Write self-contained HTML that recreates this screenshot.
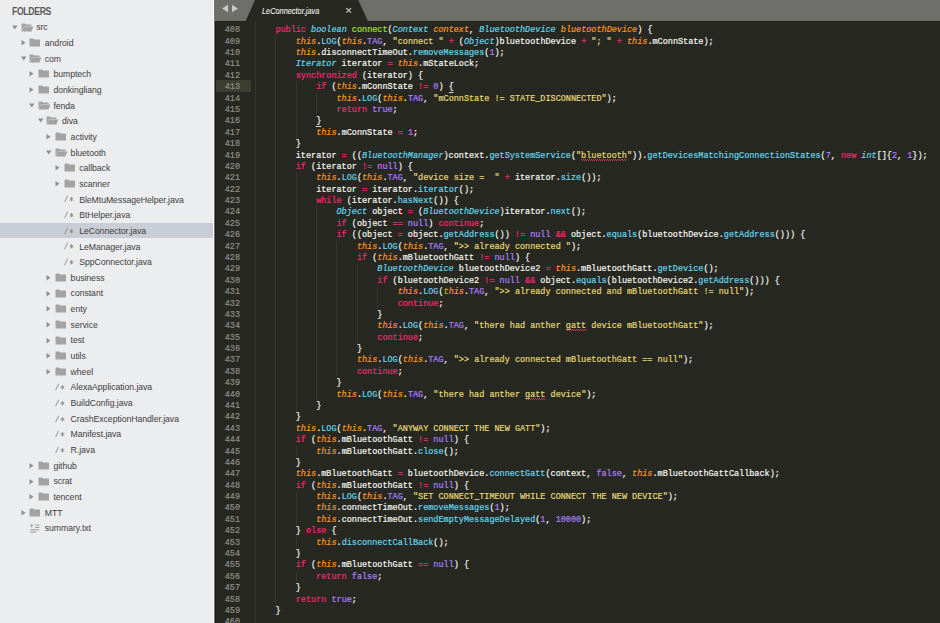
<!DOCTYPE html>
<html><head><meta charset="utf-8"><style>
html,body{margin:0;padding:0;width:940px;height:623px;overflow:hidden;background:#272822}
#side{position:absolute;left:0;top:0;width:213px;height:623px;background:#ecedef;overflow:hidden}
#sep{position:absolute;left:213px;top:0;width:1px;height:623px;background:#fbfbfb}
#sep2{position:absolute;left:214px;top:0px;width:1px;height:623px;background:#72736e}
#sep3{position:absolute;left:215px;top:22px;width:1px;height:601px;background:#1c1d18}
.hd{position:absolute;left:11.8px;top:6.0px;font:bold 10.2px/12px "Liberation Sans",sans-serif;color:#5a5a5a;letter-spacing:-0.4px;transform-origin:0 50%;transform:scaleX(0.85)}
.tx{position:absolute;font:8.7px "Liberation Sans",sans-serif;color:#404040;white-space:nowrap;letter-spacing:-0.05px}
.jv{position:absolute;font:8.5px "Liberation Sans",sans-serif;color:#8a8a8a;white-space:nowrap}
.sel{position:absolute;left:0;width:213px;background:#c9cdd5}
.ic{position:absolute;display:block}
#tabbar{position:absolute;left:214px;top:0;width:726px;height:21px;background:#6e6f6a;border-bottom:1px solid #20211c}
#tab{position:absolute;left:246px;top:0;width:122px;height:20px}
.tabt{position:absolute;left:261.5px;top:4.6px;font:italic 8.6px/12px "Liberation Sans",sans-serif;color:#f3f3f0;letter-spacing:0px;-webkit-text-stroke:0.1px #f3f3f0;transform-origin:0 50%;transform:scaleX(0.855);white-space:nowrap}
#ed{position:absolute;left:215px;top:22px;width:725px;height:603px;background:#272822}
.ln{position:absolute;left:212.5px;width:27px;text-align:right;height:11.4px;font:9.5px/11.385px "Liberation Mono",monospace;color:#8f908a;transform-origin:100% 50%;transform:scaleX(0.8937);white-space:pre;-webkit-text-stroke:0.2px currentColor}
.cl{position:absolute;left:254.8px;height:11.4px;font:9.5px/11.385px "Liberation Mono",monospace;color:#f8f8f2;transform-origin:0 50%;transform:scaleX(0.8937);white-space:pre;-webkit-text-stroke:0.2px currentColor}
.g{position:absolute;width:1px;background:#35362e}
.hl{position:absolute;left:216px;top:80.4px;width:35.3px;height:11.5px;background:#3e3d32}
.k{color:#f92672} .st{color:#66d9ef;font-style:italic} .c{color:#ae81ff} .th{color:#fd971f;font-style:italic}
.ty{color:#66d9ef;font-style:italic} .fn{color:#a6e22e} .pa{color:#fd971f;font-style:italic} .m{color:#66d9ef} .s{color:#e6db74}
.ub{border-bottom:1px solid #d8d8d0}
.sq{background-image:repeating-linear-gradient(90deg,#c23a62 0 1.1px,transparent 1.1px 2.2px),repeating-linear-gradient(90deg,transparent 0 1.1px,#c23a62 1.1px 2.2px);background-size:100% 1px,100% 1px;background-position:0 9px,0 10px;background-repeat:no-repeat}
</style></head><body>
<div id=side>
<div class=hd>FOLDERS</div>
<svg class=ic style="left:12.00px;top:24.50px" width="6" height="5"><path d="M0 0.5H5.5L2.75 4.5Z" fill="#8f8f8f"/></svg><svg class=ic style="left:20.50px;top:22.50px" width="13" height="9"><path d="M0.5 1.2Q0.5 0.5 1.2 0.5H4.2L5.2 1.5H10Q10.5 1.5 10.5 2V3.2H3L0.5 8.5Z" fill="#a3a3a3"/><path d="M3 3.6H12.4L10.4 8.5H0.8Z" fill="#a3a3a3"/></svg><div class=tx style="left:36.20px;top:20.27px;height:15.66px;line-height:15.66px">src</div><svg class=ic style="left:20.60px;top:40.16px" width="5" height="6"><path d="M0.5 0L4.5 2.75L0.5 5.5Z" fill="#8f8f8f"/></svg><svg class=ic style="left:29.10px;top:38.16px" width="12" height="9"><path d="M0.5 1.2Q0.5 0.5 1.2 0.5H4.2L5.2 1.5H10.3Q11 1.5 11 2.2V8Q11 8.5 10.5 8.5H1Q0.5 8.5 0.5 8Z" fill="#a3a3a3"/></svg><div class=tx style="left:44.80px;top:35.93px;height:15.66px;line-height:15.66px">android</div><svg class=ic style="left:20.60px;top:55.82px" width="6" height="5"><path d="M0 0.5H5.5L2.75 4.5Z" fill="#8f8f8f"/></svg><svg class=ic style="left:29.10px;top:53.82px" width="13" height="9"><path d="M0.5 1.2Q0.5 0.5 1.2 0.5H4.2L5.2 1.5H10Q10.5 1.5 10.5 2V3.2H3L0.5 8.5Z" fill="#a3a3a3"/><path d="M3 3.6H12.4L10.4 8.5H0.8Z" fill="#a3a3a3"/></svg><div class=tx style="left:44.80px;top:51.59px;height:15.66px;line-height:15.66px">com</div><svg class=ic style="left:29.20px;top:71.48px" width="5" height="6"><path d="M0.5 0L4.5 2.75L0.5 5.5Z" fill="#8f8f8f"/></svg><svg class=ic style="left:37.70px;top:69.48px" width="12" height="9"><path d="M0.5 1.2Q0.5 0.5 1.2 0.5H4.2L5.2 1.5H10.3Q11 1.5 11 2.2V8Q11 8.5 10.5 8.5H1Q0.5 8.5 0.5 8Z" fill="#a3a3a3"/></svg><div class=tx style="left:53.40px;top:67.25px;height:15.66px;line-height:15.66px">bumptech</div><svg class=ic style="left:29.20px;top:87.14px" width="5" height="6"><path d="M0.5 0L4.5 2.75L0.5 5.5Z" fill="#8f8f8f"/></svg><svg class=ic style="left:37.70px;top:85.14px" width="12" height="9"><path d="M0.5 1.2Q0.5 0.5 1.2 0.5H4.2L5.2 1.5H10.3Q11 1.5 11 2.2V8Q11 8.5 10.5 8.5H1Q0.5 8.5 0.5 8Z" fill="#a3a3a3"/></svg><div class=tx style="left:53.40px;top:82.91px;height:15.66px;line-height:15.66px">donkingliang</div><svg class=ic style="left:29.20px;top:102.80px" width="6" height="5"><path d="M0 0.5H5.5L2.75 4.5Z" fill="#8f8f8f"/></svg><svg class=ic style="left:37.70px;top:100.80px" width="13" height="9"><path d="M0.5 1.2Q0.5 0.5 1.2 0.5H4.2L5.2 1.5H10Q10.5 1.5 10.5 2V3.2H3L0.5 8.5Z" fill="#a3a3a3"/><path d="M3 3.6H12.4L10.4 8.5H0.8Z" fill="#a3a3a3"/></svg><div class=tx style="left:53.40px;top:98.57px;height:15.66px;line-height:15.66px">fenda</div><svg class=ic style="left:37.80px;top:118.46px" width="6" height="5"><path d="M0 0.5H5.5L2.75 4.5Z" fill="#8f8f8f"/></svg><svg class=ic style="left:46.30px;top:116.46px" width="13" height="9"><path d="M0.5 1.2Q0.5 0.5 1.2 0.5H4.2L5.2 1.5H10Q10.5 1.5 10.5 2V3.2H3L0.5 8.5Z" fill="#a3a3a3"/><path d="M3 3.6H12.4L10.4 8.5H0.8Z" fill="#a3a3a3"/></svg><div class=tx style="left:62.00px;top:114.23px;height:15.66px;line-height:15.66px">diva</div><svg class=ic style="left:46.40px;top:134.12px" width="5" height="6"><path d="M0.5 0L4.5 2.75L0.5 5.5Z" fill="#8f8f8f"/></svg><svg class=ic style="left:54.90px;top:132.12px" width="12" height="9"><path d="M0.5 1.2Q0.5 0.5 1.2 0.5H4.2L5.2 1.5H10.3Q11 1.5 11 2.2V8Q11 8.5 10.5 8.5H1Q0.5 8.5 0.5 8Z" fill="#a3a3a3"/></svg><div class=tx style="left:70.60px;top:129.89px;height:15.66px;line-height:15.66px">activity</div><svg class=ic style="left:46.40px;top:149.78px" width="6" height="5"><path d="M0 0.5H5.5L2.75 4.5Z" fill="#8f8f8f"/></svg><svg class=ic style="left:54.90px;top:147.78px" width="13" height="9"><path d="M0.5 1.2Q0.5 0.5 1.2 0.5H4.2L5.2 1.5H10Q10.5 1.5 10.5 2V3.2H3L0.5 8.5Z" fill="#a3a3a3"/><path d="M3 3.6H12.4L10.4 8.5H0.8Z" fill="#a3a3a3"/></svg><div class=tx style="left:70.60px;top:145.55px;height:15.66px;line-height:15.66px">bluetooth</div><svg class=ic style="left:55.00px;top:165.44px" width="5" height="6"><path d="M0.5 0L4.5 2.75L0.5 5.5Z" fill="#8f8f8f"/></svg><svg class=ic style="left:63.50px;top:163.44px" width="12" height="9"><path d="M0.5 1.2Q0.5 0.5 1.2 0.5H4.2L5.2 1.5H10.3Q11 1.5 11 2.2V8Q11 8.5 10.5 8.5H1Q0.5 8.5 0.5 8Z" fill="#a3a3a3"/></svg><div class=tx style="left:79.20px;top:161.21px;height:15.66px;line-height:15.66px">callback</div><svg class=ic style="left:55.00px;top:181.10px" width="5" height="6"><path d="M0.5 0L4.5 2.75L0.5 5.5Z" fill="#8f8f8f"/></svg><svg class=ic style="left:63.50px;top:179.10px" width="12" height="9"><path d="M0.5 1.2Q0.5 0.5 1.2 0.5H4.2L5.2 1.5H10.3Q11 1.5 11 2.2V8Q11 8.5 10.5 8.5H1Q0.5 8.5 0.5 8Z" fill="#a3a3a3"/></svg><div class=tx style="left:79.20px;top:176.87px;height:15.66px;line-height:15.66px">scanner</div><svg class=ic style="left:63.70px;top:195.26px" width="11" height="8"><path d="M0.6 7.2L3.6 0.8" stroke="#8a8a8a" stroke-width="0.9" fill="none"/><path d="M7.5 2.2V6.4M5.7 3.2L9.3 5.4M9.3 3.2L5.7 5.4" stroke="#8a8a8a" stroke-width="0.9" fill="none"/></svg><div class=tx style="left:79.20px;top:192.53px;height:15.66px;line-height:15.66px">BleMtuMessageHelper.java</div><svg class=ic style="left:63.70px;top:210.92px" width="11" height="8"><path d="M0.6 7.2L3.6 0.8" stroke="#8a8a8a" stroke-width="0.9" fill="none"/><path d="M7.5 2.2V6.4M5.7 3.2L9.3 5.4M9.3 3.2L5.7 5.4" stroke="#8a8a8a" stroke-width="0.9" fill="none"/></svg><div class=tx style="left:79.20px;top:208.19px;height:15.66px;line-height:15.66px">BtHelper.java</div><div class=sel style="top:222.75px;height:15.66px"></div><svg class=ic style="left:63.70px;top:226.58px" width="11" height="8"><path d="M0.6 7.2L3.6 0.8" stroke="#8a8a8a" stroke-width="0.9" fill="none"/><path d="M7.5 2.2V6.4M5.7 3.2L9.3 5.4M9.3 3.2L5.7 5.4" stroke="#8a8a8a" stroke-width="0.9" fill="none"/></svg><div class=tx style="left:79.20px;top:223.85px;height:15.66px;line-height:15.66px">LeConnector.java</div><svg class=ic style="left:63.70px;top:242.24px" width="11" height="8"><path d="M0.6 7.2L3.6 0.8" stroke="#8a8a8a" stroke-width="0.9" fill="none"/><path d="M7.5 2.2V6.4M5.7 3.2L9.3 5.4M9.3 3.2L5.7 5.4" stroke="#8a8a8a" stroke-width="0.9" fill="none"/></svg><div class=tx style="left:79.20px;top:239.51px;height:15.66px;line-height:15.66px">LeManager.java</div><svg class=ic style="left:63.70px;top:257.90px" width="11" height="8"><path d="M0.6 7.2L3.6 0.8" stroke="#8a8a8a" stroke-width="0.9" fill="none"/><path d="M7.5 2.2V6.4M5.7 3.2L9.3 5.4M9.3 3.2L5.7 5.4" stroke="#8a8a8a" stroke-width="0.9" fill="none"/></svg><div class=tx style="left:79.20px;top:255.17px;height:15.66px;line-height:15.66px">SppConnector.java</div><svg class=ic style="left:46.40px;top:275.06px" width="5" height="6"><path d="M0.5 0L4.5 2.75L0.5 5.5Z" fill="#8f8f8f"/></svg><svg class=ic style="left:54.90px;top:273.06px" width="12" height="9"><path d="M0.5 1.2Q0.5 0.5 1.2 0.5H4.2L5.2 1.5H10.3Q11 1.5 11 2.2V8Q11 8.5 10.5 8.5H1Q0.5 8.5 0.5 8Z" fill="#a3a3a3"/></svg><div class=tx style="left:70.60px;top:270.83px;height:15.66px;line-height:15.66px">business</div><svg class=ic style="left:46.40px;top:290.72px" width="5" height="6"><path d="M0.5 0L4.5 2.75L0.5 5.5Z" fill="#8f8f8f"/></svg><svg class=ic style="left:54.90px;top:288.72px" width="12" height="9"><path d="M0.5 1.2Q0.5 0.5 1.2 0.5H4.2L5.2 1.5H10.3Q11 1.5 11 2.2V8Q11 8.5 10.5 8.5H1Q0.5 8.5 0.5 8Z" fill="#a3a3a3"/></svg><div class=tx style="left:70.60px;top:286.49px;height:15.66px;line-height:15.66px">constant</div><svg class=ic style="left:46.40px;top:306.38px" width="5" height="6"><path d="M0.5 0L4.5 2.75L0.5 5.5Z" fill="#8f8f8f"/></svg><svg class=ic style="left:54.90px;top:304.38px" width="12" height="9"><path d="M0.5 1.2Q0.5 0.5 1.2 0.5H4.2L5.2 1.5H10.3Q11 1.5 11 2.2V8Q11 8.5 10.5 8.5H1Q0.5 8.5 0.5 8Z" fill="#a3a3a3"/></svg><div class=tx style="left:70.60px;top:302.15px;height:15.66px;line-height:15.66px">enty</div><svg class=ic style="left:46.40px;top:322.04px" width="5" height="6"><path d="M0.5 0L4.5 2.75L0.5 5.5Z" fill="#8f8f8f"/></svg><svg class=ic style="left:54.90px;top:320.04px" width="12" height="9"><path d="M0.5 1.2Q0.5 0.5 1.2 0.5H4.2L5.2 1.5H10.3Q11 1.5 11 2.2V8Q11 8.5 10.5 8.5H1Q0.5 8.5 0.5 8Z" fill="#a3a3a3"/></svg><div class=tx style="left:70.60px;top:317.81px;height:15.66px;line-height:15.66px">service</div><svg class=ic style="left:46.40px;top:337.70px" width="5" height="6"><path d="M0.5 0L4.5 2.75L0.5 5.5Z" fill="#8f8f8f"/></svg><svg class=ic style="left:54.90px;top:335.70px" width="12" height="9"><path d="M0.5 1.2Q0.5 0.5 1.2 0.5H4.2L5.2 1.5H10.3Q11 1.5 11 2.2V8Q11 8.5 10.5 8.5H1Q0.5 8.5 0.5 8Z" fill="#a3a3a3"/></svg><div class=tx style="left:70.60px;top:333.47px;height:15.66px;line-height:15.66px">test</div><svg class=ic style="left:46.40px;top:353.36px" width="5" height="6"><path d="M0.5 0L4.5 2.75L0.5 5.5Z" fill="#8f8f8f"/></svg><svg class=ic style="left:54.90px;top:351.36px" width="12" height="9"><path d="M0.5 1.2Q0.5 0.5 1.2 0.5H4.2L5.2 1.5H10.3Q11 1.5 11 2.2V8Q11 8.5 10.5 8.5H1Q0.5 8.5 0.5 8Z" fill="#a3a3a3"/></svg><div class=tx style="left:70.60px;top:349.13px;height:15.66px;line-height:15.66px">utils</div><svg class=ic style="left:46.40px;top:369.02px" width="5" height="6"><path d="M0.5 0L4.5 2.75L0.5 5.5Z" fill="#8f8f8f"/></svg><svg class=ic style="left:54.90px;top:367.02px" width="12" height="9"><path d="M0.5 1.2Q0.5 0.5 1.2 0.5H4.2L5.2 1.5H10.3Q11 1.5 11 2.2V8Q11 8.5 10.5 8.5H1Q0.5 8.5 0.5 8Z" fill="#a3a3a3"/></svg><div class=tx style="left:70.60px;top:364.79px;height:15.66px;line-height:15.66px">wheel</div><svg class=ic style="left:55.10px;top:383.18px" width="11" height="8"><path d="M0.6 7.2L3.6 0.8" stroke="#8a8a8a" stroke-width="0.9" fill="none"/><path d="M7.5 2.2V6.4M5.7 3.2L9.3 5.4M9.3 3.2L5.7 5.4" stroke="#8a8a8a" stroke-width="0.9" fill="none"/></svg><div class=tx style="left:70.60px;top:380.45px;height:15.66px;line-height:15.66px">AlexaApplication.java</div><svg class=ic style="left:55.10px;top:398.84px" width="11" height="8"><path d="M0.6 7.2L3.6 0.8" stroke="#8a8a8a" stroke-width="0.9" fill="none"/><path d="M7.5 2.2V6.4M5.7 3.2L9.3 5.4M9.3 3.2L5.7 5.4" stroke="#8a8a8a" stroke-width="0.9" fill="none"/></svg><div class=tx style="left:70.60px;top:396.11px;height:15.66px;line-height:15.66px">BuildConfig.java</div><svg class=ic style="left:55.10px;top:414.50px" width="11" height="8"><path d="M0.6 7.2L3.6 0.8" stroke="#8a8a8a" stroke-width="0.9" fill="none"/><path d="M7.5 2.2V6.4M5.7 3.2L9.3 5.4M9.3 3.2L5.7 5.4" stroke="#8a8a8a" stroke-width="0.9" fill="none"/></svg><div class=tx style="left:70.60px;top:411.77px;height:15.66px;line-height:15.66px">CrashExceptionHandler.java</div><svg class=ic style="left:55.10px;top:430.16px" width="11" height="8"><path d="M0.6 7.2L3.6 0.8" stroke="#8a8a8a" stroke-width="0.9" fill="none"/><path d="M7.5 2.2V6.4M5.7 3.2L9.3 5.4M9.3 3.2L5.7 5.4" stroke="#8a8a8a" stroke-width="0.9" fill="none"/></svg><div class=tx style="left:70.60px;top:427.43px;height:15.66px;line-height:15.66px">Manifest.java</div><svg class=ic style="left:55.10px;top:445.82px" width="11" height="8"><path d="M0.6 7.2L3.6 0.8" stroke="#8a8a8a" stroke-width="0.9" fill="none"/><path d="M7.5 2.2V6.4M5.7 3.2L9.3 5.4M9.3 3.2L5.7 5.4" stroke="#8a8a8a" stroke-width="0.9" fill="none"/></svg><div class=tx style="left:70.60px;top:443.09px;height:15.66px;line-height:15.66px">R.java</div><svg class=ic style="left:29.20px;top:462.98px" width="5" height="6"><path d="M0.5 0L4.5 2.75L0.5 5.5Z" fill="#8f8f8f"/></svg><svg class=ic style="left:37.70px;top:460.98px" width="12" height="9"><path d="M0.5 1.2Q0.5 0.5 1.2 0.5H4.2L5.2 1.5H10.3Q11 1.5 11 2.2V8Q11 8.5 10.5 8.5H1Q0.5 8.5 0.5 8Z" fill="#a3a3a3"/></svg><div class=tx style="left:53.40px;top:458.75px;height:15.66px;line-height:15.66px">github</div><svg class=ic style="left:29.20px;top:478.64px" width="5" height="6"><path d="M0.5 0L4.5 2.75L0.5 5.5Z" fill="#8f8f8f"/></svg><svg class=ic style="left:37.70px;top:476.64px" width="12" height="9"><path d="M0.5 1.2Q0.5 0.5 1.2 0.5H4.2L5.2 1.5H10.3Q11 1.5 11 2.2V8Q11 8.5 10.5 8.5H1Q0.5 8.5 0.5 8Z" fill="#a3a3a3"/></svg><div class=tx style="left:53.40px;top:474.41px;height:15.66px;line-height:15.66px">scrat</div><svg class=ic style="left:29.20px;top:494.30px" width="5" height="6"><path d="M0.5 0L4.5 2.75L0.5 5.5Z" fill="#8f8f8f"/></svg><svg class=ic style="left:37.70px;top:492.30px" width="12" height="9"><path d="M0.5 1.2Q0.5 0.5 1.2 0.5H4.2L5.2 1.5H10.3Q11 1.5 11 2.2V8Q11 8.5 10.5 8.5H1Q0.5 8.5 0.5 8Z" fill="#a3a3a3"/></svg><div class=tx style="left:53.40px;top:490.07px;height:15.66px;line-height:15.66px">tencent</div><svg class=ic style="left:20.60px;top:509.96px" width="5" height="6"><path d="M0.5 0L4.5 2.75L0.5 5.5Z" fill="#8f8f8f"/></svg><svg class=ic style="left:29.10px;top:507.96px" width="12" height="9"><path d="M0.5 1.2Q0.5 0.5 1.2 0.5H4.2L5.2 1.5H10.3Q11 1.5 11 2.2V8Q11 8.5 10.5 8.5H1Q0.5 8.5 0.5 8Z" fill="#a3a3a3"/></svg><div class=tx style="left:44.80px;top:505.73px;height:15.66px;line-height:15.66px">MTT</div><svg class=ic style="left:29.80px;top:523.62px" width="11" height="9"><path d="M0.2 1.1H3.2M1.7 1.1V3.6M5.3 1.1H9.3M5.3 3.5H9.3M0.2 5.8H9.3M0.2 8H6.3" stroke="#8f8f8f" stroke-width="0.9" fill="none"/></svg><div class=tx style="left:44.80px;top:521.39px;height:15.66px;line-height:15.66px">summary.txt</div>
</div>
<div id=sep></div>
<div id=tabbar></div>
<svg style="position:absolute;left:0;top:0" width="940" height="22"><path d="M245.2 22L255 0H358.3L368.3 22Z" fill="#272822"/><path d="M222 8.5L228 4.8V12.2Z M232 4.8L238 8.5L232 12.2Z" fill="#c8c8c4"/><path d="M346.3 8.1L351.1 12.6M351.1 8.1L346.3 12.6" stroke="#c4c4c0" stroke-width="1.3"/></svg>
<div class=tabt>LeConnector.java</div>
<div id=ed></div>
<div id=sep2></div><div id=sep3></div>
<div class=hl></div>
<div class=g style="left:254.80px;top:22.00px;height:605.70px"></div><div class=g style="left:275.18px;top:35.69px;height:569.25px"></div><div class=g style="left:295.56px;top:81.22px;height:56.93px"></div><div class=g style="left:295.56px;top:172.31px;height:239.08px"></div><div class=g style="left:295.56px;top:445.55px;height:11.38px"></div><div class=g style="left:295.56px;top:491.08px;height:34.16px"></div><div class=g style="left:295.56px;top:536.62px;height:11.38px"></div><div class=g style="left:295.56px;top:570.78px;height:11.38px"></div><div class=g style="left:315.94px;top:92.61px;height:22.77px"></div><div class=g style="left:315.94px;top:206.46px;height:193.54px"></div><div class=g style="left:336.32px;top:240.62px;height:136.62px"></div><div class=g style="left:356.70px;top:263.38px;height:79.69px"></div><div class=g style="left:377.08px;top:286.16px;height:22.77px"></div>
<div class=ln style="top:24.30px">408</div><div class=cl style="top:24.30px">    <span class=k>public</span> <span class=st>boolean</span> <span class=fn>connect</span>(<span class=ty>Context</span> <span class=pa>context</span>, <span class=ty>BluetoothDevice</span> <span class=pa>bluetoothDevice</span>) {</div><div class=ln style="top:35.69px">409</div><div class=cl style="top:35.69px">        <span class=th>this</span>.<span class=m>LOG</span>(<span class=th>this</span>.<span class=c>TAG</span>, <span class=s>&quot;connect &quot;</span> <span class=k>+</span> (<span class=ty>Object</span>)bluetoothDevice <span class=k>+</span> <span class=s>&quot;; &quot;</span> <span class=k>+</span> <span class=th>this</span>.mConnState);</div><div class=ln style="top:47.07px">410</div><div class=cl style="top:47.07px">        <span class=th>this</span>.disconnectTimeOut.<span class=m>removeMessages</span>(<span class=c>1</span>);</div><div class=ln style="top:58.45px">411</div><div class=cl style="top:58.45px">        <span class=ty>Iterator</span> iterator <span class=k>=</span> <span class=th>this</span>.mStateLock;</div><div class=ln style="top:69.84px">412</div><div class=cl style="top:69.84px">        <span class=k>synchronized</span> (iterator) {</div><div class=ln style="top:81.22px">413</div><div class=cl style="top:81.22px">            <span class=k>if</span> (<span class=th>this</span>.mConnState <span class=k>!=</span> <span class=c>0</span>) <span class=ub>{</span></div><div class=ln style="top:92.61px">414</div><div class=cl style="top:92.61px">                <span class=th>this</span>.<span class=m>LOG</span>(<span class=th>this</span>.<span class=c>TAG</span>, <span class=s>&quot;mConnState != STATE_DISCONNECTED&quot;</span>);</div><div class=ln style="top:103.99px">415</div><div class=cl style="top:103.99px">                <span class=k>return</span> <span class=c>true</span>;</div><div class=ln style="top:115.38px">416</div><div class=cl style="top:115.38px">            <span class=ub>}</span></div><div class=ln style="top:126.77px">417</div><div class=cl style="top:126.77px">            <span class=th>this</span>.mConnState <span class=k>=</span> <span class=c>1</span>;</div><div class=ln style="top:138.15px">418</div><div class=cl style="top:138.15px">        }</div><div class=ln style="top:149.53px">419</div><div class=cl style="top:149.53px">        iterator <span class=k>=</span> ((<span class=ty>BluetoothManager</span>)context.<span class=m>getSystemService</span>(<span class=s>"<span class=sq>bluetooth</span>"</span>)).<span class=m>getDevicesMatchingConnectionStates</span>(<span class=c>7</span>, <span class=k>new</span> <span class=st>int</span>[]{<span class=c>2</span>, <span class=c>1</span>});</div><div class=ln style="top:160.92px">420</div><div class=cl style="top:160.92px">        <span class=k>if</span> (iterator <span class=k>!=</span> <span class=c>null</span>) {</div><div class=ln style="top:172.31px">421</div><div class=cl style="top:172.31px">            <span class=th>this</span>.<span class=m>LOG</span>(<span class=th>this</span>.<span class=c>TAG</span>, <span class=s>&quot;device size =  &quot;</span> <span class=k>+</span> iterator.<span class=m>size</span>());</div><div class=ln style="top:183.69px">422</div><div class=cl style="top:183.69px">            iterator <span class=k>=</span> iterator.<span class=m>iterator</span>();</div><div class=ln style="top:195.08px">423</div><div class=cl style="top:195.08px">            <span class=k>while</span> (iterator.<span class=m>hasNext</span>()) {</div><div class=ln style="top:206.46px">424</div><div class=cl style="top:206.46px">                <span class=ty>Object</span> object <span class=k>=</span> (<span class=ty>BluetoothDevice</span>)iterator.<span class=m>next</span>();</div><div class=ln style="top:217.84px">425</div><div class=cl style="top:217.84px">                <span class=k>if</span> (object <span class=k>==</span> <span class=c>null</span>) <span class=k>continue</span>;</div><div class=ln style="top:229.23px">426</div><div class=cl style="top:229.23px">                <span class=k>if</span> ((object <span class=k>=</span> object.<span class=m>getAddress</span>()) <span class=k>!=</span> <span class=c>null</span> <span class=k>&amp;&amp;</span> object.<span class=m>equals</span>(bluetoothDevice.<span class=m>getAddress</span>())) {</div><div class=ln style="top:240.62px">427</div><div class=cl style="top:240.62px">                    <span class=th>this</span>.<span class=m>LOG</span>(<span class=th>this</span>.<span class=c>TAG</span>, <span class=s>&quot;&gt;&gt; already connected &quot;</span>);</div><div class=ln style="top:252.00px">428</div><div class=cl style="top:252.00px">                    <span class=k>if</span> (<span class=th>this</span>.mBluetoothGatt <span class=k>!=</span> <span class=c>null</span>) {</div><div class=ln style="top:263.38px">429</div><div class=cl style="top:263.38px">                        <span class=ty>BluetoothDevice</span> bluetoothDevice2 <span class=k>=</span> <span class=th>this</span>.mBluetoothGatt.<span class=m>getDevice</span>();</div><div class=ln style="top:274.77px">430</div><div class=cl style="top:274.77px">                        <span class=k>if</span> (bluetoothDevice2 <span class=k>!=</span> <span class=c>null</span> <span class=k>&amp;&amp;</span> object.<span class=m>equals</span>(bluetoothDevice2.<span class=m>getAddress</span>())) {</div><div class=ln style="top:286.16px">431</div><div class=cl style="top:286.16px">                            <span class=th>this</span>.<span class=m>LOG</span>(<span class=th>this</span>.<span class=c>TAG</span>, <span class=s>&quot;&gt;&gt; already connected and mBluetoothGatt != null&quot;</span>);</div><div class=ln style="top:297.54px">432</div><div class=cl style="top:297.54px">                            <span class=k>continue</span>;</div><div class=ln style="top:308.93px">433</div><div class=cl style="top:308.93px">                        }</div><div class=ln style="top:320.31px">434</div><div class=cl style="top:320.31px">                        <span class=th>this</span>.<span class=m>LOG</span>(<span class=th>this</span>.<span class=c>TAG</span>, <span class=s>&quot;there had anther <span class=sq>gatt</span> device mBluetoothGatt&quot;</span>);</div><div class=ln style="top:331.69px">435</div><div class=cl style="top:331.69px">                        <span class=k>continue</span>;</div><div class=ln style="top:343.08px">436</div><div class=cl style="top:343.08px">                    }</div><div class=ln style="top:354.47px">437</div><div class=cl style="top:354.47px">                    <span class=th>this</span>.<span class=m>LOG</span>(<span class=th>this</span>.<span class=c>TAG</span>, <span class=s>&quot;&gt;&gt; already connected mBluetoothGatt == null&quot;</span>);</div><div class=ln style="top:365.85px">438</div><div class=cl style="top:365.85px">                    <span class=k>continue</span>;</div><div class=ln style="top:377.24px">439</div><div class=cl style="top:377.24px">                }</div><div class=ln style="top:388.62px">440</div><div class=cl style="top:388.62px">                <span class=th>this</span>.<span class=m>LOG</span>(<span class=th>this</span>.<span class=c>TAG</span>, <span class=s>&quot;there had anther <span class=sq>gatt</span> device&quot;</span>);</div><div class=ln style="top:400.00px">441</div><div class=cl style="top:400.00px">            }</div><div class=ln style="top:411.39px">442</div><div class=cl style="top:411.39px">        }</div><div class=ln style="top:422.77px">443</div><div class=cl style="top:422.77px">        <span class=th>this</span>.<span class=m>LOG</span>(<span class=th>this</span>.<span class=c>TAG</span>, <span class=s>&quot;ANYWAY CONNECT THE NEW GATT&quot;</span>);</div><div class=ln style="top:434.16px">444</div><div class=cl style="top:434.16px">        <span class=k>if</span> (<span class=th>this</span>.mBluetoothGatt <span class=k>!=</span> <span class=c>null</span>) {</div><div class=ln style="top:445.55px">445</div><div class=cl style="top:445.55px">            <span class=th>this</span>.mBluetoothGatt.<span class=m>close</span>();</div><div class=ln style="top:456.93px">446</div><div class=cl style="top:456.93px">        }</div><div class=ln style="top:468.31px">447</div><div class=cl style="top:468.31px">        <span class=th>this</span>.mBluetoothGatt <span class=k>=</span> bluetoothDevice.<span class=m>connectGatt</span>(context, <span class=c>false</span>, <span class=th>this</span>.mBluetoothGattCallback);</div><div class=ln style="top:479.70px">448</div><div class=cl style="top:479.70px">        <span class=k>if</span> (<span class=th>this</span>.mBluetoothGatt <span class=k>!=</span> <span class=c>null</span>) {</div><div class=ln style="top:491.08px">449</div><div class=cl style="top:491.08px">            <span class=th>this</span>.<span class=m>LOG</span>(<span class=th>this</span>.<span class=c>TAG</span>, <span class=s>&quot;SET CONNECT_TIMEOUT WHILE CONNECT THE NEW DEVICE&quot;</span>);</div><div class=ln style="top:502.47px">450</div><div class=cl style="top:502.47px">            <span class=th>this</span>.connectTimeOut.<span class=m>removeMessages</span>(<span class=c>1</span>);</div><div class=ln style="top:513.86px">451</div><div class=cl style="top:513.86px">            <span class=th>this</span>.connectTimeOut.<span class=m>sendEmptyMessageDelayed</span>(<span class=c>1</span>, <span class=c>10000</span>);</div><div class=ln style="top:525.24px">452</div><div class=cl style="top:525.24px">        } <span class=k>else</span> {</div><div class=ln style="top:536.62px">453</div><div class=cl style="top:536.62px">            <span class=th>this</span>.<span class=m>disconnectCallBack</span>();</div><div class=ln style="top:548.01px">454</div><div class=cl style="top:548.01px">        }</div><div class=ln style="top:559.39px">455</div><div class=cl style="top:559.39px">        <span class=k>if</span> (<span class=th>this</span>.mBluetoothGatt <span class=k>==</span> <span class=c>null</span>) {</div><div class=ln style="top:570.78px">456</div><div class=cl style="top:570.78px">            <span class=k>return</span> <span class=c>false</span>;</div><div class=ln style="top:582.16px">457</div><div class=cl style="top:582.16px">        }</div><div class=ln style="top:593.55px">458</div><div class=cl style="top:593.55px">        <span class=k>return</span> <span class=c>true</span>;</div><div class=ln style="top:604.93px">459</div><div class=cl style="top:604.93px">    }</div><div class=ln style="top:616.32px">460</div><div class=cl style="top:616.32px"></div>
</body></html>
